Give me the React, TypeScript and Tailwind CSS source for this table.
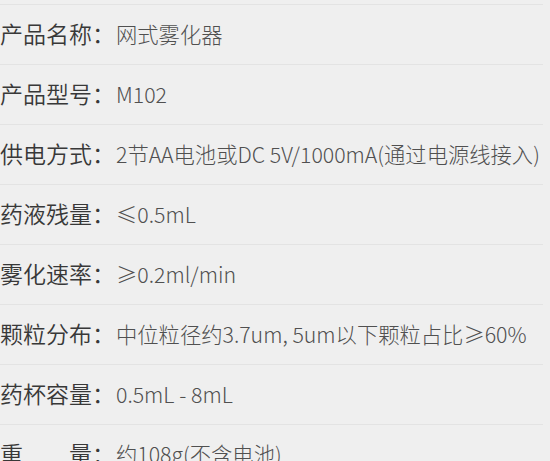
import React from "react";

const rows: { label: React.ReactNode; value: string }[] = [
  { label: "产品名称", value: "网式雾化器" },
  { label: "产品型号", value: "M102" },
  { label: "供电方式", value: "2节AA电池或DC 5V/1000mA(通过电源线接入)" },
  { label: "药液残量", value: "≤0.5mL" },
  { label: "雾化速率", value: "≥0.2ml/min" },
  { label: "颗粒分布", value: "中位粒径约3.7um, 5um以下颗粒占比≥60%" },
  { label: "药杯容量", value: "0.5mL - 8mL" },
  {
    label: (
      <span className="flex w-[92px] justify-between">
        <span>重</span>
        <span>量</span>
      </span>
    ),
    value: "约108g(不含电池)",
  },
];

function Divider() {
  return (
    <div className="w-[543px]">
      <div className="h-px bg-[#e3e3e3]" />
    </div>
  );
}

export default function App() {
  return (
    <div
      className="h-[461px] w-[550px] overflow-hidden bg-[#efefef]"
      style={{ fontFamily: '"Noto Sans CJK SC", "Noto Sans", sans-serif' }}
    >
      <div className="h-[4px]" />
      <Divider />
      {rows.map((r, i) => (
        <div key={i}>
          <div className="flex h-[59px] items-center whitespace-nowrap pb-[2px]">
            <div className="flex items-center text-[23px] font-[350] text-[#383838]">
              {r.label}
              <span>：</span>
            </div>
            <div className="pl-[1px] text-[21.3px] font-light text-[#505050]">{r.value}</div>
          </div>
          <Divider />
        </div>
      ))}
    </div>
  );
}
